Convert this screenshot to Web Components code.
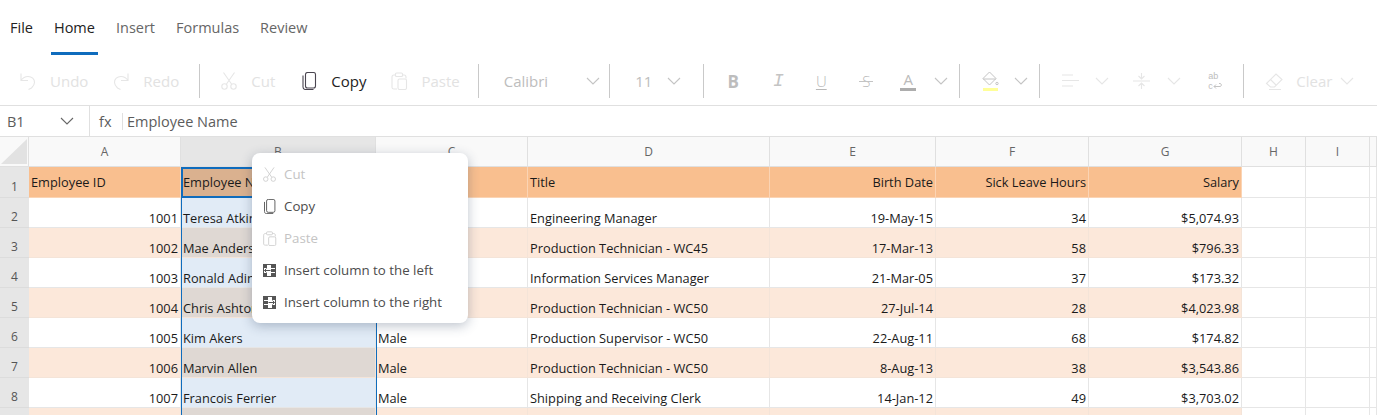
<!DOCTYPE html>
<html>
<head>
<meta charset="utf-8">
<title>Spreadsheet</title>
<style>
  html, body { margin: 0; padding: 0; height: 100%; overflow: hidden; background: #fff; }
  body { font-family: "Open Sans", "Noto Sans", sans-serif; }
</style>
</head>
<body>
<sheet-app></sheet-app>

<script>
// shared icon paths, all drawn on a 18x18 box
const ICONS = {
  undo: '<path d="M2 1.500v7h7M2 8.500c2-3 4-4 7-4 4 0 6.500 2.500 6.500 6 0 2-1 3.500-3 5.500l-3 1.500"/>',
  redo: '<path d="M16 1.500v7H9M16 8.500c-2-3-4-4-7-4-4 0-6.500 2.500-6.500 6 0 2 1 3.500 3 5.500l3 1.500"/>',
  cut: '<path d="M3.500 .5l8 11.500M14.500 .5l-8 11.500"/><circle cx="4.500" cy="14.500" r="2.700"/><circle cx="13.500" cy="14.500" r="2.700"/>',
  copy: '<rect x="5.500" y=".5" width="10" height="15.500" rx="2"/><path d="M3 3.500V15c0 1.700 1 2.500 2.500 2.500h8"/>',
  paste: '<path d="M5.500 3H4C2.800 3 2 3.800 2 5v10.500c0 1 .8 1.500 2 1.500h3"/><path d="M12.500 3H14c1.200 0 2 .8 2 2v1.500"/><rect x="5.500" y="1" width="7" height="3.500" rx="1"/><rect x="8" y="7" width="8.500" height="10.500" rx="1.500"/>',
  align: '<path d="M1 3h11M1 8.500h18M1 14h11"/>',
  valign: '<path d="M1 9h17M9.500 1v6M6.500 4l3 3 3-3M9.500 17v-6M6.500 14l3-3 3 3"/>',
  eraser: '<path d="M1.500 11.500L11 2l6 5.500-7.500 7.500H5.500zM5.500 7.500l6 6M4 17.500h12"/>'
};

function icon(name, color, size) {
  return `<svg width="${size || 18}" height="${size || 18}" viewBox="0 0 18 18" fill="none" stroke="${color}" stroke-width="1.100">${ICONS[name]}</svg>`;
}

const CHEVRON = c => `<svg width="14" height="8" viewBox="0 0 14 8" fill="none" stroke="${c}" stroke-width="1.100"><path d="M1 1l6 6 6-6"/></svg>`;

class RibbonTabs extends HTMLElement {
  constructor() {
    super();
    this.attachShadow({ mode: 'open' });
    this.shadowRoot.innerHTML = `
      <style>
        :host { display: flex; height: 55px; padding-left: 10px; gap: 21px; font-size: 14.500px; color: #666; box-sizing: border-box; }
        span { display: block; padding-top: 18px; line-height: 20px; position: relative; white-space: nowrap; }
        .dark { color: #222; }
        .on::after { content: ""; position: absolute; left: -3px; right: -3px; top: 52px; height: 3px; background: #0f6cbd; }
      </style>
      <span class="dark">File</span>
      <span class="dark on">Home</span>
      <span>Insert</span>
      <span>Formulas</span>
      <span>Review</span>
    `;
  }
}
customElements.define('ribbon-tabs', RibbonTabs);

class ToolSep extends HTMLElement {
  constructor() {
    super();
    this.attachShadow({ mode: 'open' });
    this.shadowRoot.innerHTML = `
      <style>:host { display: block; width: 1px; height: 34px; background: #c9c9c9; flex: none; }</style>
    `;
  }
}
customElements.define('tool-sep', ToolSep);

// one toolbar entry: an optional slotted icon, then a label
class ToolBtn extends HTMLElement {
  constructor() {
    super();
    this.attachShadow({ mode: 'open' });
    this.shadowRoot.innerHTML = `
      <style>
        :host { display: flex; align-items: center; gap: var(--gap, 13px); flex: none; height: 34px; font-size: 15px; color: #e2e2e2; white-space: nowrap; }
        ::slotted(svg) { display: block; flex: none; }
      </style>
      <slot name="icon"></slot><slot></slot>
    `;
  }
}
customElements.define('tool-btn', ToolBtn);

class ToolBar extends HTMLElement {
  constructor() {
    super();
    this.attachShadow({ mode: 'open' });
    const off = '#e6e6e6', mid = '#c4c4c4';
    const si = (n, c) => icon(n, c).replace('<svg', '<svg slot="icon"');
    this.shadowRoot.innerHTML = `
      <style>
        :host { display: flex; align-items: center; height: 51px; padding: 2px 0 0 19px; box-sizing: border-box; border-bottom: 1px solid #e0e0e0; }
        svg { display: block; flex: none; }
        .bold { font: bold 17px "Open Sans", sans-serif; color: #bdbdbd; width: 14px; text-align: center; }
        .ital { font: italic 18px "Liberation Mono", monospace; color: #c4c4c4; width: 14px; text-align: center; }
        .glyph { font-size: 15px; font-weight: 300; color: #b8b8b8; line-height: 18px; text-align: center; width: 16px; position: relative; }
        .under { text-decoration: underline; text-decoration-thickness: 1px; text-underline-offset: 2px; }
        .strike::after { content: ""; position: absolute; left: 1px; right: 1px; top: 9px; height: 1px; background: #c4c4c4; }
        .fontcolor { width: 16px; text-align: center; font-size: 15px; line-height: 17px; color: #bbb; border-bottom: 3px solid #adadad; height: 17px; }
        .wrap { font: 9px/10.500px "Liberation Sans", sans-serif; width: 14px; color: #bdbdbd; white-space: nowrap; }
        .wrap svg { display: inline-block; vertical-align: -1px; }
      </style>
      <tool-btn>${si('undo', off)}Undo</tool-btn>
      <tool-btn style="margin-left:24px">${si('redo', off)}Redo</tool-btn>
      <tool-sep style="margin-left:20px"></tool-sep>
      <tool-btn style="margin-left:20px">${si('cut', off)}Cut</tool-btn>
      <tool-btn style="margin-left:25px;color:#222">${si('copy', '#4a4550')}Copy</tool-btn>
      <tool-btn style="margin-left:24px">${si('paste', off)}Paste</tool-btn>
      <tool-sep style="margin-left:18px"></tool-sep>
      <tool-btn style="margin-left:25px;color:#bdbdbd">Calibri</tool-btn>
      <span style="margin-left:38px">${CHEVRON(mid)}</span>
      <tool-sep style="margin-left:9px"></tool-sep>
      <tool-btn style="margin-left:25px;color:#bdbdbd">11</tool-btn>
      <span style="margin-left:15px">${CHEVRON(mid)}</span>
      <tool-sep style="margin-left:22px"></tool-sep>
      <span class="bold" style="margin-left:22px">B</span>
      <span class="ital" style="margin-left:31px">I</span>
      <span class="glyph under" style="margin-left:28px">U</span>
      <span class="glyph strike" style="margin-left:29px">S</span>
      <span class="fontcolor" style="margin-left:26px">A</span>
      <span style="margin-left:18px">${CHEVRON(mid)}</span>
      <tool-sep style="margin-left:11px"></tool-sep>
      <svg style="margin-left:22px" width="17" height="20" viewBox="0 0 17 20" fill="none" stroke="#c4c4c4" stroke-width="1"><path d="M7.500 1l6.500 6.500-6.500 6.500L1 7.500zM1 8h13"/><circle cx="15" cy="12.500" r="1.200"/><path d="M1 18.500h15" stroke="#ffff99" stroke-width="3"/></svg>
      <span style="margin-left:15px">${CHEVRON(mid)}</span>
      <tool-sep style="margin-left:11px"></tool-sep>
      <span style="margin-left:21px">${icon('align', off)}</span>
      <span style="margin-left:16px">${CHEVRON(off)}</span>
      <span style="margin-left:23px">${icon('valign', off)}</span>
      <span style="margin-left:17px">${CHEVRON(off)}</span>
      <span class="wrap" style="margin-left:27px">ab<br>c<svg width="9" height="7" viewBox="0 0 9 7" fill="none" stroke="#c4c4c4"><path d="M6 .5h1.500c1 0 1 3 0 3H1M3 1.500l-2 2 2 2"/></svg></span>
      <tool-sep style="margin-left:21px"></tool-sep>
      <tool-btn style="margin-left:21px">${si('eraser', off)}Clear</tool-btn>
      <span style="margin-left:8px">${CHEVRON(off)}</span>
    `;
  }
}
customElements.define('tool-bar', ToolBar);

class FormulaBar extends HTMLElement {
  constructor() {
    super();
    this.attachShadow({ mode: 'open' });
    this.shadowRoot.innerHTML = `
      <style>
        :host { display: flex; align-items: center; height: 31px; box-sizing: border-box; border-bottom: 1px solid #e0e0e0; font-size: 14.500px; color: #5c5c5c; }
        .name { display: flex; align-items: center; justify-content: space-between; box-sizing: border-box; width: 90px; height: 30px; padding: 0 15px 0 7px; border-right: 1px solid #e0e0e0; flex: none; }
        .fx { margin-left: 9px; width: 23px; flex: none; }
        .val { border-left: 1px solid #e0e0e0; padding-left: 4px; line-height: 17px; }
        svg { display: block; }
      </style>
      <div class="name"><span>B1</span>${CHEVRON('#666')}</div>
      <div class="fx">fx</div>
      <div class="val">Employee Name</div>
    `;
  }
}
customElements.define('formula-bar', FormulaBar);

const COLS = ['A', 'B', 'C', 'D', 'E', 'F', 'G', 'H', 'I', ''];
// column C stays blank down to row 5: the menu lies over it
const HEAD = ['Employee ID', 'Employee Name', '', 'Title', 'Birth Date', 'Sick Leave Hours', 'Salary'];
const DATA = [
  [1001, 'Teresa Atkinson', '', 'Engineering Manager', '19-May-15', 34, '$5,074.93'],
  [1002, 'Mae Anderson', '', 'Production Technician - WC45', '17-Mar-13', 58, '$796.33'],
  [1003, 'Ronald Adina', '', 'Information Services Manager', '21-Mar-05', 37, '$173.32'],
  [1004, 'Chris Ashton', '', 'Production Technician - WC50', '27-Jul-14', 28, '$4,023.98'],
  [1005, 'Kim Akers', 'Male', 'Production Supervisor - WC50', '22-Aug-11', 68, '$174.82'],
  [1006, 'Marvin Allen', 'Male', 'Production Technician - WC50', '8-Aug-13', 38, '$3,543.86'],
  [1007, 'Francois Ferrier', 'Male', 'Shipping and Receiving Clerk', '14-Jan-12', 49, '$3,703.02'],
  ['', '', '', '', '', '', '']
];
const RIGHT = [0, 4, 5, 6];

class SheetGrid extends HTMLElement {
  constructor() {
    super();
    this.attachShadow({ mode: 'open' });
    let cells = '<div class="corner"><i></i></div>';
    COLS.forEach(c => { cells += `<div class="ch ${c === 'B' ? 'sel' : ''}">${c}</div>`; });

    cells += '<div class="rh">1</div>';
    for (let i = 0; i < 10; i++) {
      cells += `<div class="c hd ${i < 7 ? 'orange' : ''} ${i === 1 ? 'b' : ''} ${i > 3 && i < 7 ? 'r' : ''}">${HEAD[i] || ''}</div>`;
    }
    DATA.forEach((row, n) => {
      const even = n % 2 === 1;
      cells += `<div class="rh">${n < 7 ? n + 2 : ''}</div>`;
      for (let i = 0; i < 10; i++) {
        const v = row[i] === undefined ? '' : row[i];
        cells += `<div class="c ${i < 7 && even ? 'stripe' : ''} ${i === 1 ? 'b' : ''} ${RIGHT.includes(i) ? 'r' : ''}">${v}</div>`;
      }
    });

    this.shadowRoot.innerHTML = `
      <style>
        :host { display: block; position: relative; font-size: 12.800px; color: #1a1a1a; }
        .cells { display: grid;
          grid-template-columns: 29px 152px 195px 152px 242px 166px 153px 153px 64px 64px 1fr;
          grid-template-rows: 30px 31px repeat(8, 30px); }
        .corner { background: #f9f9f9; border-right: 1px solid #e0e0e0; border-bottom: 1px solid #e0e0e0; position: relative; }
        .corner i { position: absolute; right: 1px; bottom: 2px; width: 26px; height: 25px; background: #e2e2e2; clip-path: polygon(100% 0, 100% 100%, 0 100%); }
        .ch { background: #f9f9f9; border-right: 1px solid #e0e0e0; border-bottom: 1px solid #e0e0e0; text-align: center; line-height: 30px; color: #666; font-size: 12px; }
        .ch.sel { background: #e6e6e6; }
        .rh { background: #e6e6e6; border-bottom: 1px solid #dcdcdc; text-align: center; color: #555; font-size: 12px; display: flex; align-items: flex-end; justify-content: center; padding-bottom: 2px; box-sizing: border-box; }
        .c { box-sizing: border-box; border-right: 1px solid #e6e6e6; border-bottom: 1px solid #e6e6e6; padding: 0 2px; white-space: nowrap; overflow: hidden; display: flex; align-items: flex-end; line-height: 18px; }
        .c.hd { align-items: center; }
        .c.r { justify-content: flex-end; }
        .orange { background: #f9bf8f; border-color: #fbd4b4; }
        .stripe { background: #fce8da; border-color: #f4e4d8; }
        .b { background: #e1ebf6; }
        .b.stripe { background: #dfd8d3; }
        .b.orange { background: #dab18f; }
        /* the selected range lies over the cells */
        .range { position: absolute; left: 181px; top: 30px; width: 194px; bottom: 0; border-left: 1px solid #0f6cbd; border-right: 1px solid #0f6cbd; pointer-events: none; }
        .active { position: absolute; left: 181px; top: 30px; width: 192px; height: 27px; border: 2px solid #0f6cbd; pointer-events: none; }
      </style>
      <div class="cells">${cells}</div>
      <div class="range"></div>
      <div class="active"></div>
    `;
  }
}
customElements.define('sheet-grid', SheetGrid);

class MenuItem extends HTMLElement {
  constructor() {
    super();
    this.attachShadow({ mode: 'open' });
    this.shadowRoot.innerHTML = `
      <style>
        :host { display: flex; align-items: center; height: 32px; padding-left: 10px; gap: 7px; font-size: 13.300px; color: #4c4c4c; white-space: nowrap; }
        :host([disabled]) { color: #c4c4c4; }
        ::slotted(svg) { display: block; flex: none; }
      </style>
      <slot name="icon"></slot><slot></slot>
    `;
  }
}
customElements.define('menu-item', MenuItem);

class ContextMenu extends HTMLElement {
  constructor() {
    super();
    this.attachShadow({ mode: 'open' });
    this.shadowRoot.innerHTML = `
      <style>
        :host { display: block; position: absolute; left: 252px; top: 153px; width: 216px; box-sizing: border-box; padding: 5px 0; background: #fff; border-radius: 8px; box-shadow: 0 3px 12px rgba(40, 60, 90, .3); }
      </style>
      <slot></slot>
    `;
  }
}
customElements.define('context-menu', ContextMenu);

class SheetApp extends HTMLElement {
  constructor() {
    super();
    this.attachShadow({ mode: 'open' });
    const slotted = (n, c) => icon(n, c, 15).replace('<svg', '<svg slot="icon"');
    // table with a white middle column and an arrow going into it
    const gridIcon = flip => `<svg slot="icon" width="13" height="13" viewBox="0 0 13 13" style="margin:0 1px">
      <g transform="${flip ? 'matrix(-1 0 0 1 13 0)' : ''}" fill="#555">
      <rect x=".5" y=".5" width="12" height="12" fill="#fff" stroke="#555"/>
      <rect x="1" y="1" width="3" height="3"/><rect x="1" y="9" width="3" height="3"/>
      <rect x="8" y="1" width="4" height="3"/><rect x="8" y="5" width="4" height="3"/><rect x="8" y="9" width="4" height="3"/>
      <path d="M7.500 6.500H1.500M3.500 4.500l-2 2 2 2" fill="none" stroke="#555"/>
      </g></svg>`;
    this.shadowRoot.innerHTML = `
      <style>
        :host { display: block; position: relative; width: 1377px; height: 415px; overflow: hidden; font-family: "Open Sans", "Noto Sans", sans-serif; }
      </style>
      <ribbon-tabs></ribbon-tabs>
      <tool-bar></tool-bar>
      <formula-bar></formula-bar>
      <sheet-grid></sheet-grid>
      <context-menu>
        <menu-item disabled>${slotted('cut', '#cfcfcf')}Cut</menu-item>
        <menu-item>${slotted('copy', '#555')}Copy</menu-item>
        <menu-item disabled>${slotted('paste', '#cfcfcf')}Paste</menu-item>
        <menu-item>${gridIcon(false)}Insert column to the left</menu-item>
        <menu-item>${gridIcon(true)}Insert column to the right</menu-item>
      </context-menu>
    `;
  }
}
customElements.define('sheet-app', SheetApp);
</script>
</body>
</html>
